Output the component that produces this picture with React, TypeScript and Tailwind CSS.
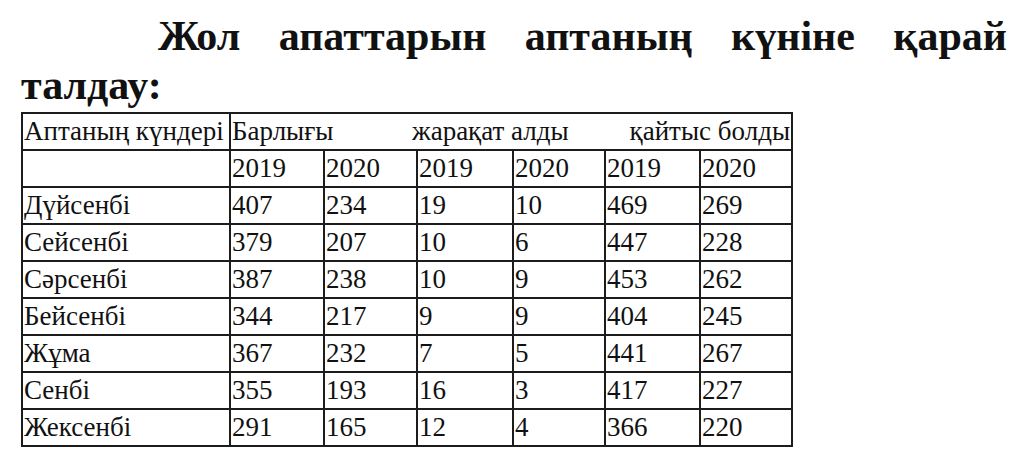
import React from "react";

const rows: [string, string, string, string, string, string, string][] = [
  ["Дүйсенбі", "407", "234", "19", "10", "469", "269"],
  ["Сейсенбі", "379", "207", "10", "6", "447", "228"],
  ["Сәрсенбі", "387", "238", "10", "9", "453", "262"],
  ["Бейсенбі", "344", "217", "9", "9", "404", "245"],
  ["Жұма", "367", "232", "7", "5", "441", "267"],
  ["Сенбі", "355", "193", "16", "3", "417", "227"],
  ["Жексенбі", "291", "165", "12", "4", "366", "220"],
];

const cell =
  "border-2 border-[#1c1c1c] p-0 pl-[1px] h-[35.3px] leading-[35px] align-top whitespace-nowrap overflow-hidden";

export default function App() {
  return (
    <div
      className="w-[1024px] h-[462px] bg-white text-[#111] overflow-hidden pl-[21px] pt-[12px]"
      style={{ fontFamily: '"Liberation Serif", "Times New Roman", serif' }}
    >
      <div className="w-[986px] font-bold text-[42px] leading-[49px]">
        <div className="pl-[137px] text-justify [text-align-last:justify]">
          Жол апаттарын аптаның күніне қарай
        </div>
        <div>талдау:</div>
      </div>
      <table className="mt-[2px] table-fixed border-collapse text-[27px] w-[770px]">
        <colgroup>
          <col className="w-[208px]" />
          <col className="w-[94px]" />
          <col className="w-[93px]" />
          <col className="w-[96px]" />
          <col className="w-[92px]" />
          <col className="w-[95px]" />
          <col className="w-[92px]" />
        </colgroup>
        <tbody>
          <tr>
            <td className={cell}>Аптаның күндері</td>
            <td className={cell} colSpan={6}>
              <div className="flex pr-[1px]">
                <span className="w-[180px] shrink-0">Барлығы</span>
                <span>жарақат алды</span>
                <span className="ml-auto">қайтыс болды</span>
              </div>
            </td>
          </tr>
          <tr>
            <td className={cell}></td>
            <td className={cell}>2019</td>
            <td className={cell}>2020</td>
            <td className={cell}>2019</td>
            <td className={cell}>2020</td>
            <td className={cell}>2019</td>
            <td className={cell}>2020</td>
          </tr>
          {rows.map((r) => (
            <tr key={r[0]}>
              {r.map((v, i) => (
                <td key={i} className={cell}>
                  {v}
                </td>
              ))}
            </tr>
          ))}
        </tbody>
      </table>
    </div>
  );
}
